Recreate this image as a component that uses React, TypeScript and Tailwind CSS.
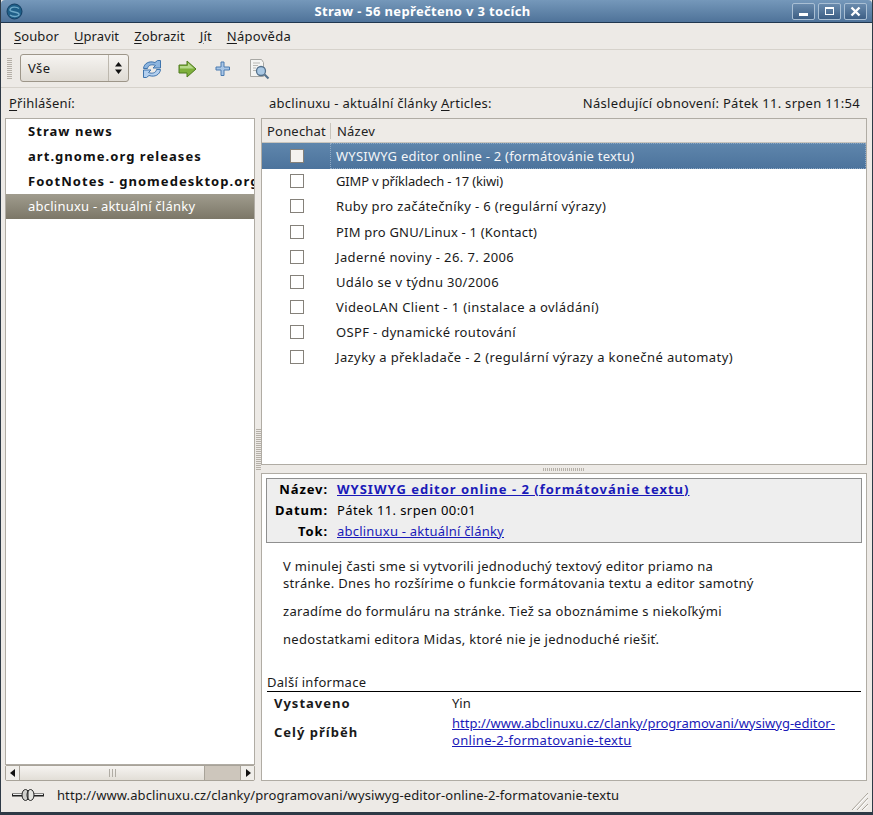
import React from "react";

const F = "font-['DejaVu_Sans',sans-serif]";

function U({ children }: { children: React.ReactNode }) {
  return <span className="underline underline-offset-2">{children}</span>;
}

function WinBtn({ children }: { children: React.ReactNode }) {
  return (
    <div className="w-[23px] h-[17px] rounded-[2px] border border-[#a9bfd4] bg-gradient-to-b from-[#6a8bad] to-[#3d5f85] flex items-center justify-center">
      {children}
    </div>
  );
}

function Logo() {
  return (
    <svg width="17" height="17" viewBox="0 0 17 17">
      <circle cx="8.500" cy="8.500" r="7.500" fill="#1f5f88" stroke="#143f63" />
      <path d="M13 5.500C10.500 3.500 5 3.500 4 6.500s8 2 9 4.500-5.500 3.500-9 1" fill="none" stroke="#6fa9c8" strokeWidth="1.400" />
    </svg>
  );
}

function Refresh() {
  return (
    <svg width="20" height="20" viewBox="0 0 20 20">
      <path d="M1.500 9.500C2 4.500 7 1.500 13 3.500L15.500 1.500 18.500 1.500 18.500 9 11 9 13.500 6.500C10 5 6 6 5.500 9.500z" fill="#8db5df" stroke="#3f74ad" />
      <path d="M18.500 10.500C18 15.500 13 18.500 7 16.500L4.500 18.500 1.500 18.500 1.500 11 9 11 6.500 13.500C10 15 14 14 14.500 10.500z" fill="#b3cfee" stroke="#3f74ad" />
    </svg>
  );
}

function Arrow() {
  return (
    <svg width="20" height="18" viewBox="0 0 20 18">
      <path d="M1 5h8V1l9 8-9 8v-4H1z" fill="#7fb03c" stroke="#4e7a1e" />
      <path d="M2 6h8V3l6 5.500H2z" fill="#b6d98a" />
    </svg>
  );
}

function Plus() {
  return (
    <svg width="16" height="16" viewBox="0 0 16 16">
      <path d="M6 1h3v5h5.500v3H9v5.500H6V9H1V6h5z" fill="#a9c6e6" stroke="#4a7bb0" />
    </svg>
  );
}

function Find() {
  return (
    <svg width="22" height="22" viewBox="0 0 22 22">
      <path d="M1.500 1.500h11l2 3v14h-13z" fill="#f4f4f2" stroke="#a8a8a4" />
      <path d="M4 5h7M4 7.500h5M4 10h3M4 12.500h3" stroke="#b8b8b4" />
      <circle cx="12" cy="13" r="4.500" fill="#a9c8e4" stroke="#54718c" strokeWidth="1.300" />
      <path d="M15.500 16.500l4 4" stroke="#54718c" strokeWidth="2.200" />
    </svg>
  );
}

function Plug() {
  return (
    <svg width="32" height="12" viewBox="0 0 32 12">
      <path d="M0 6h12M20 6h12" stroke="#222" strokeWidth="3" />
      <path d="M1 5.500h10M21 5.500h10" stroke="#eee" strokeWidth="1" />
      <ellipse cx="13.500" cy="6" rx="3.500" ry="5.500" fill="#d0d0cc" stroke="#222" />
      <ellipse cx="18.500" cy="6" rx="3.500" ry="5.500" fill="#e4e4e0" stroke="#222" />
      <path d="M16 1v10" stroke="#222" />
    </svg>
  );
}

const feeds = ["Straw news", "art.gnome.org releases", "FootNotes - gnomedesktop.org"];
const rows = [
  { t: "WYSIWYG editor online - 2 (formátovánie textu)", c: "tracking-[0.24px]" },
  { t: "GIMP v příkladech - 17 (kiwi)", c: "tracking-[-0.16px]" },
  { t: "Ruby pro začátečníky - 6 (regulární výrazy)", c: "tracking-[0.34px]" },
  { t: "PIM pro GNU/Linux - 1 (Kontact)", c: "tracking-[0.2px]" },
  { t: "Jaderné noviny - 26. 7. 2006", c: "tracking-[0.39px]" },
  { t: "Událo se v týdnu 30/2006", c: "tracking-[0.35px]" },
  { t: "VideoLAN Client - 1 (instalace a ovládání)", c: "tracking-[0.39px]" },
  { t: "OSPF - dynamické routování", c: "tracking-[0.35px]" },
  { t: "Jazyky a překladače - 2 (regulární výrazy a konečné automaty)", c: "tracking-[0.39px]" },
];

export default function App() {
  return (
    <div className={`${F} w-[873px] h-[815px] overflow-hidden flex flex-col bg-[#edeae6] text-[13px] leading-[16px] text-[#1a1a1a] border-x border-b-[3px] border-[#2e3a46]`}>
      <div className="h-[23px] shrink-0 flex items-center pl-[5px] pr-[5px] rounded-t-[4px] bg-gradient-to-b from-[#7598ba] to-[#4f7399] border-b border-[#20374f]">
        <Logo />
        <div className="flex-1 text-center text-white font-bold tracking-[0.33px] pl-[30px]">Straw - 56 nepřečteno v 3 tocích</div>
        <div className="flex gap-[3px]">
          <WinBtn><div className="w-[9px] h-[3px] bg-white mt-[7px]" /></WinBtn>
          <WinBtn><div className="w-[9px] h-[8px] border border-t-2 border-white" /></WinBtn>
          <WinBtn>
            <svg width="11" height="11" viewBox="0 0 11 11"><path d="M1.500 1.500l8 8M9.500 1.500l-8 8" stroke="#fff" strokeWidth="2.400" /></svg>
          </WinBtn>
        </div>
      </div>

      <div className="h-[27px] shrink-0 flex items-center gap-[15px] pl-[13px] pb-[1px] tracking-[0.1px] border-b border-[#d6d2cb]">
        <span><U>S</U>oubor</span>
        <span><U>U</U>pravit</span>
        <span><U>Z</U>obrazit</span>
        <span><U>J</U>ít</span>
        <span className="tracking-[0.3px]"><U>N</U>ápověda</span>
      </div>

      <div className="h-[38px] shrink-0 flex items-center pl-[6px] border-b border-[#d6d2cb]">
        <div className="w-[5px] h-[22px] mr-[8px] bg-[repeating-linear-gradient(to_bottom,#b5b0a8_0,#b5b0a8_1px,transparent_1px,transparent_2px)]" />
        <div className="w-[109px] h-[28px] mb-[1px] flex items-center rounded-[3px] border border-[#9d9689] bg-gradient-to-b from-[#f6f4f1] to-[#dfdbd4]">
          <span className="flex-1 pl-[7px] tracking-[0.3px]">Vše</span>
          <div className="w-[20px] h-full border-l border-[#bdb8ae] flex items-center justify-center">
            <svg width="9" height="14" viewBox="0 0 9 14"><path d="M4.500 1l3.500 4.500H1zM4.500 13L1 8.500h7z" fill="#111" /></svg>
          </div>
        </div>
        <div className="ml-[13px] w-[20px] flex justify-center"><Refresh /></div>
        <div className="ml-[16px] w-[20px] flex justify-center"><Arrow /></div>
        <div className="ml-[17px] w-[16px] flex justify-center"><Plus /></div>
        <div className="ml-[18px] w-[22px] flex justify-center"><Find /></div>
      </div>

      <div className="h-[30px] shrink-0 flex items-center pl-[8px] pr-[12px] pb-[1px]">
        <span className="w-[260px] tracking-[0.2px]"><U>P</U>řihlášení:</span>
        <span className="tracking-[0.27px]">abclinuxu - aktuální články <U>A</U>rticles:</span>
        <span className="ml-auto tracking-[0.3px]">Následující obnovení: Pátek 11. srpen 11:54</span>
      </div>

      <div className="flex-1 min-h-0 flex pl-[4px] pr-[5px]">
        <div className="w-[250px] shrink-0 flex flex-col">
          <div className="flex-1 min-h-0 bg-white border border-[#b0aca4] overflow-hidden">
            {feeds.map((f) => (
              <div key={f} className="h-[25px] flex items-center pl-[22px] pb-[2px] font-bold text-[#111] whitespace-nowrap tracking-[1.05px]">{f}</div>
            ))}
            <div className="h-[25px] flex items-center pl-[22px] pb-[2px] bg-gradient-to-b from-[#a09c8e] to-[#7c7768] text-white tracking-[0.23px]">abclinuxu - aktuální články</div>
          </div>
          <div className="h-[16px] shrink-0 flex border border-[#a8a399] rounded-[2px] bg-[#cdc6bc] mb-[1px]">
            <div className="w-[14px] flex items-center justify-center bg-[#f0eeea] border-r border-[#a8a399]">
              <svg width="6" height="8" viewBox="0 0 6 8"><path d="M5 0v8L0 4z" fill="#111" /></svg>
            </div>
            <div className="w-[185px] flex items-center justify-center gap-[2px] bg-gradient-to-b from-[#f6f4f1] to-[#e2ded7] border-r border-[#a8a399]">
              <i className="w-px h-[8px] bg-[#b0aca4]" /><i className="w-px h-[8px] bg-[#b0aca4]" /><i className="w-px h-[8px] bg-[#b0aca4]" />
            </div>
            <div className="flex-1" />
            <div className="w-[14px] flex items-center justify-center bg-[#f0eeea] border-l border-[#a8a399]">
              <svg width="6" height="8" viewBox="0 0 6 8"><path d="M1 0v8l5-4z" fill="#111" /></svg>
            </div>
          </div>
        </div>

        <div className="w-[6px] shrink-0 flex items-center justify-center">
          <div className="w-[5px] h-[42px] bg-[repeating-linear-gradient(to_bottom,#b5b0a8_0,#b5b0a8_1px,transparent_1px,transparent_2px)]" />
        </div>

        <div className="flex-1 min-w-0 flex flex-col">
          <div className="h-[347px] shrink-0 bg-white border border-[#b0aca4] overflow-hidden">
            <div className="h-[24.4px] flex items-center bg-[#eeebe7] border-b border-[#c9c5bd] text-[#222] tracking-[0.2px]">
              <div className="w-[69px] pl-[5px] border-r border-[#c9c5bd] h-[16px] leading-[16px] whitespace-nowrap">Ponechat</div>
              <div className="pl-[6px]">Název</div>
            </div>
            {rows.map((r, i) => (
              <div key={r.t} className={`h-[25.2px] flex items-center ${i === 0 ? "bg-gradient-to-b from-[#5f86ac] to-[#4c739c] text-[#f4f6f8]" : ""}`}>
                <div className="w-[69px] flex justify-center shrink-0">
                  <div className={`w-[14px] h-[14px] border border-[#85817a] ${i === 0 ? "bg-[#f4f2ef]" : "bg-white"}`} />
                </div>
                <div className={`pl-[5px] whitespace-nowrap ${r.c} flex-1 h-full flex items-center ${i === 0 ? "border border-dotted border-[#8fa9c4] -ml-[1px]" : ""}`}>{r.t}</div>
              </div>
            ))}
          </div>

          <div className="h-[8px] shrink-0 flex items-center justify-center">
            <div className="w-[42px] h-[3px] bg-[repeating-linear-gradient(to_right,#b5b0a8_0,#b5b0a8_1px,transparent_1px,transparent_2px)]" />
          </div>

          <div className="flex-1 min-h-0 bg-white border border-[#b0aca4] mb-[1px] overflow-hidden pt-[4px]">
            <div className="mx-[4px] h-[65px] pb-[2px] bg-[#eeeeee] border border-[#8f8f8f] flex flex-col justify-center gap-[5px] text-black">
              <div className="flex h-[16px]"><b className="w-[61px] text-right tracking-[0.9px] whitespace-nowrap">Název:</b><a className="ml-[9px] font-bold text-[#1a1ab8] underline tracking-[1px] whitespace-nowrap">WYSIWYG editor online - 2 (formátovánie textu)</a></div>
              <div className="flex h-[16px]"><b className="w-[61px] text-right tracking-[0.9px] whitespace-nowrap">Datum:</b><span className="ml-[9px] tracking-[0.4px]">Pátek 11. srpen 00:01</span></div>
              <div className="flex h-[16px]"><b className="w-[61px] text-right tracking-[0.9px] whitespace-nowrap">Tok:</b><a className="ml-[9px] text-[#1a1ab8] underline tracking-[0.22px]">abclinuxu - aktuální články</a></div>
            </div>
            <div className="pl-[21px] pt-[15px] h-[125px] tracking-[0.3px]">
              <div className="h-[17px]">V minulej časti sme si vytvorili jednoduchý textový editor priamo na</div>
              <div className="h-[28px]">stránke. Dnes ho rozšírime o funkcie formátovania textu a editor samotný</div>
              <div className="h-[28px]">zaradíme do formuláru na stránke. Tiež sa oboznámime s niekoľkými</div>
              <div>nedostatkami editora Midas, ktoré nie je jednoduché riešiť.</div>
            </div>
            <div className="mx-[5px] pt-[7px] h-[24px] leading-[14px] border-b border-black tracking-[0.27px]">Další informace</div>
            <div className="flex pl-[12px] mt-[1px] h-[20px] items-center"><b className="w-[178px] tracking-[1px]">Vystaveno</b><span>Yin</span></div>
            <div className="flex pl-[12px] items-center mt-[2px]">
              <b className="w-[178px] tracking-[1px]">Celý příběh</b>
              <a className="text-[#1a1ab8] underline leading-[17px]">http://www.abclinuxu.cz/clanky/programovani/wysiwyg-editor-<br /><span className="tracking-[0.3px]">online-2-formatovanie-textu</span></a>
            </div>
          </div>
        </div>
      </div>

      <div className="h-[30px] shrink-0 flex items-center pl-[11px] pb-[4px] relative">
        <Plug />
        <span className="ml-[13px] tracking-[0.09px]">http://www.abclinuxu.cz/clanky/programovani/wysiwyg-editor-online-2-formatovanie-textu</span>
        <svg className="absolute right-[3px] bottom-[1px]" width="18" height="20" viewBox="0 0 18 20">
          <path d="M1 19L17 2M6 19L17 7M11 19l6-6" stroke="#a8a399" strokeWidth="1" />
          <path d="M2.500 19L17 3.500M7.500 19L17 8.500M12.500 19l4.500-4.500" stroke="#fff" strokeWidth="1" />
        </svg>
      </div>
    </div>
  );
}
